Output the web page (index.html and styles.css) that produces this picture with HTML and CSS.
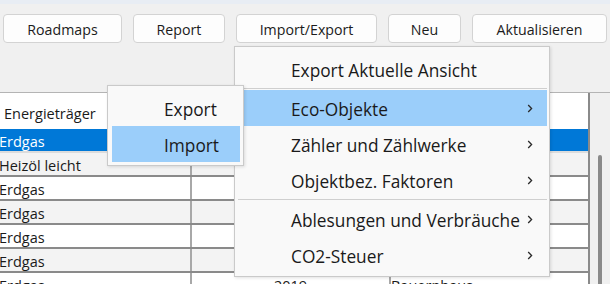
FILE: index.html
```html
<!DOCTYPE html>
<html lang="de">

<head>
    <meta charset="UTF-8" />
    <title>Objekte</title>
    <link rel="stylesheet" href="styles.css">
</head>

<body>
    <div class="titlebar"></div>

    <div class="toolbar">
        <button class="btn btn-roadmaps">Roadmaps</button>
        <button class="btn btn-report">Report</button>
        <button class="btn btn-import">Import/Export</button>
        <button class="btn btn-neu">Neu</button>
        <button class="btn btn-refresh">Aktualisieren</button>
    </div>

    <div class="grid-area">
        <div class="grid">
            <div class="row head">
                <div class="cell">Energieträger</div>
                <div class="cell"></div>
                <div class="cell"></div>
            </div>
            <div class="row selected">
                <div class="cell first">Erdgas</div>
                <div class="cell"></div>
                <div class="cell"></div>
            </div>
            <div class="row alt">
                <div class="cell first">Heizöl leicht</div>
                <div class="cell"></div>
                <div class="cell"></div>
            </div>
            <div class="row">
                <div class="cell first">Erdgas</div>
                <div class="cell"></div>
                <div class="cell"></div>
            </div>
            <div class="row alt">
                <div class="cell first">Erdgas</div>
                <div class="cell"></div>
                <div class="cell"></div>
            </div>
            <div class="row">
                <div class="cell first">Erdgas</div>
                <div class="cell"></div>
                <div class="cell"></div>
            </div>
            <div class="row alt">
                <div class="cell first">Erdgas</div>
                <div class="cell"></div>
                <div class="cell"></div>
            </div>
            <div class="row">
                <div class="cell first">Erdgas</div>
                <div class="cell center">2019</div>
                <div class="cell">Bauernhaus</div>
            </div>
        </div>
        <div class="vscroll">
            <div class="thumb"></div>
        </div>
    </div>

    <div class="menu main-menu">
        <div class="item"><span class="label">Export Aktuelle Ansicht</span></div>
        <div class="sep"></div>
        <div class="item active"><span class="label">Eco-Objekte</span><svg class="chev" width="6" height="9" viewBox="0 0 6 9"><path d="M1.2 1 L4.6 4.5 L1.2 8" /></svg></div>
        <div class="item"><span class="label">Zähler und Zählwerke</span><svg class="chev" width="6" height="9" viewBox="0 0 6 9"><path d="M1.2 1 L4.6 4.5 L1.2 8" /></svg></div>
        <div class="item"><span class="label">Objektbez. Faktoren</span><svg class="chev" width="6" height="9" viewBox="0 0 6 9"><path d="M1.2 1 L4.6 4.5 L1.2 8" /></svg></div>
        <div class="sep"></div>
        <div class="item"><span class="label">Ablesungen und Verbräuche</span><svg class="chev" width="6" height="9" viewBox="0 0 6 9"><path d="M1.2 1 L4.6 4.5 L1.2 8" /></svg></div>
        <div class="item"><span class="label">CO2-Steuer</span><svg class="chev" width="6" height="9" viewBox="0 0 6 9"><path d="M1.2 1 L4.6 4.5 L1.2 8" /></svg></div>
    </div>

    <div class="menu sub-menu">
        <div class="item"><span class="label">Export</span></div>
        <div class="item active"><span class="label">Import</span></div>
    </div>
</body>

</html>
```

FILE: styles.css
```css
body {
    margin: 0;
    width: 610px;
    height: 284px;
    overflow: hidden;
    position: relative;
    background: #f0f0f0;
    font-family: "Open Sans", "Noto Sans", sans-serif;
    color: #1a1a1a;
}

.titlebar {
    height: 4px;
    background: #e8edf4;
}

.toolbar {
    display: flex;
    gap: 11px;
    padding: 10px 0 0 3px;
}

.btn {
    box-sizing: border-box;
    height: 29px;
    padding: 1px 0 0;
    background: #fdfdfd;
    border: 1px solid #d3d3d3;
    border-radius: 4px;
    font-family: inherit;
    font-size: 14.2px;
    color: #1b1b1b;
}

.btn-roadmaps { width: 119px; }
.btn-report { width: 92px; }
.btn-import { width: 141px; }
.btn-neu { width: 73px; }
.btn-refresh { width: 135px; }

.grid-area {
    display: flex;
    margin-top: 49px;
    border-top: 1px solid #b4b4b4;
}

.grid {
    width: 588px;
    border-right: 2px solid #8a8a8a;
    font-size: 14.5px;
}

.row {
    display: grid;
    grid-template-columns: 192px 199px 197px;
    height: 22px;
    background: #fff;
    border-bottom: 2px solid #8a8a8a;
}

.row .cell {
    box-sizing: border-box;
    padding-top: 2px;
    line-height: 22px;
    white-space: nowrap;
    overflow: hidden;
    border-right: 2px solid #a8a8a8;
}

.row .cell:last-child {
    border-right: none;
}

.row .cell.first {
    text-indent: -1px;
}

.row .cell.center {
    text-align: center;
}

.row.alt {
    background: #f3f3f3;
}

.row.head {
    height: 36px;
    border-bottom: none;
}

.row.head .cell {
    padding: 3px 0 0 4px;
    line-height: 36px;
    border-right: none;
}

.row.selected {
    background: #0078d7;
    color: #fff;
    border-bottom-color: #dcdcdc;
}

.row.selected .cell {
    border-right-color: #0078d7;
}

.vscroll {
    flex: 1;
}

.thumb {
    width: 4px;
    height: 200px;
    margin: 62px 0 0 8px;
    background: #8a8a8a;
    border-radius: 2px;
}

/* context menus */
.menu {
    position: absolute;
    box-sizing: border-box;
    background: #f9f9f9;
    border: 1px solid #cacaca;
    box-shadow: 1px 1px 3px rgba(0, 0, 0, 0.12);
}

.main-menu {
    left: 234px;
    top: 46px;
    width: 316px;
    height: 231px;
    padding: 4px 0 3px;
    font-size: 17.3px;
}

.sub-menu {
    left: 107px;
    top: 85px;
    width: 137px;
    height: 81px;
    padding: 4px 0 3px;
    font-size: 17.3px;
}

.item {
    display: flex;
    align-items: center;
    justify-content: space-between;
    height: 36px;
    padding: 0 14px 0 51px;
    margin: 0 2px 0 5px;
    white-space: nowrap;
}

.item .label {
    padding-top: 4px;
    line-height: 30px;
}

.sub-menu .item {
    padding-left: 52px;
    margin: 0 3px 0 4px;
}

.item.active {
    background: #9bcefa;
}

.sep {
    height: 1px;
    margin: 1px 2px 1px 3px;
    background: #cfcfcf;
}

.chev {
    flex: none;
}

.chev path {
    fill: none;
    stroke: #2a2a2a;
    stroke-width: 1.3;
}
```
